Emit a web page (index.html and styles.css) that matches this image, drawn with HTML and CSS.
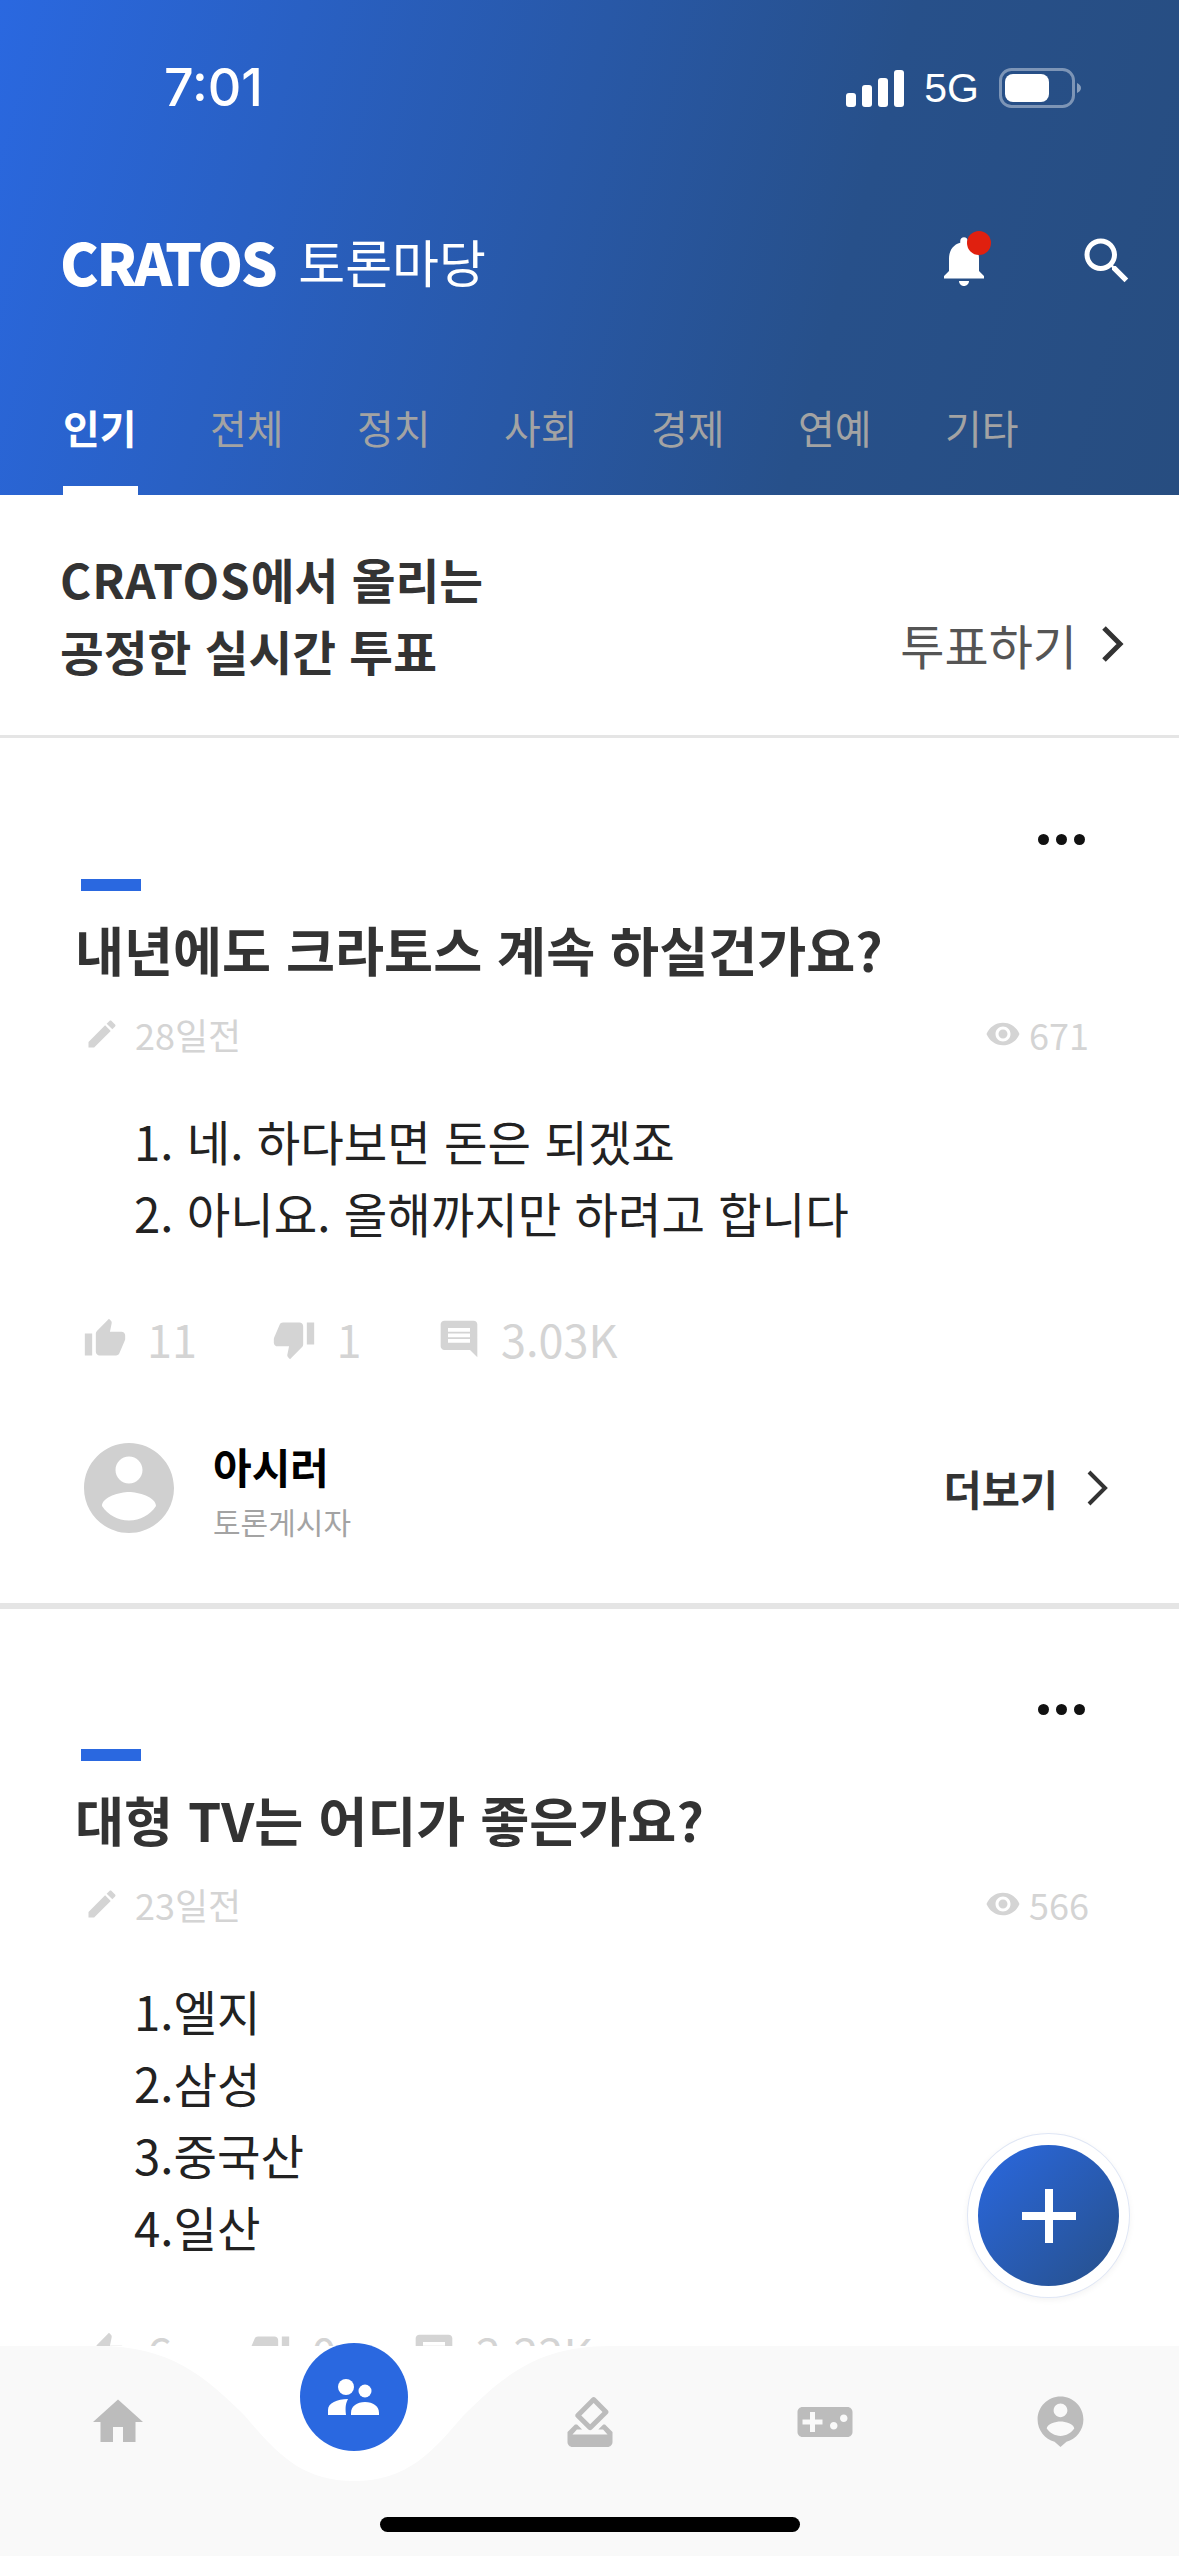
FILE: index.html
```html
<!DOCTYPE html>
<html lang="ko">
<head>
<meta charset="utf-8">
<title>CRATOS 토론마당</title>
<link rel="stylesheet" href="styles.css">
</head>
<body>
<div class="app">
  <header class="header">
    <div class="status">
      <span class="time">7:01</span>
      <div class="status-right">
        <svg class="signal" viewBox="0 0 58 37"><rect x="0" y="23" width="10" height="14" rx="3"/><rect x="16" y="15" width="10" height="22" rx="3"/><rect x="32" y="8" width="10" height="29" rx="3"/><rect x="48" y="0" width="10" height="37" rx="3"/></svg>
        <span class="net">5G</span>
        <svg class="battery" viewBox="0 0 82 40"><rect x="1.500" y="1.500" width="73" height="37" rx="11" fill="none" stroke="#fff" stroke-opacity=".4" stroke-width="3"/><rect x="6" y="6" width="44" height="28" rx="8" fill="#fff"/><path d="M78 15c2.500 1 4 3 4 5s-1.500 4-4 5z" fill="#fff" fill-opacity=".45"/></svg>
      </div>
    </div>
    <div class="topbar">
      <div class="brand"><span class="logo">CRATOS</span><span class="brand-sub">토론마당</span></div>
      <div class="top-icons">
        <span class="bell">
          <svg viewBox="0 0 24 24" class="ic-bell"><path d="M12 22c1.100 0 2-.9 2-2h-4c0 1.100.89 2 2 2zm6-6v-5c0-3.070-1.640-5.640-4.500-6.320V4c0-.83-.67-1.500-1.500-1.500s-1.500.67-1.500 1.500v.68C7.630 5.360 6 7.920 6 11v5l-2 2v1h16v-1l-2-2z"/></svg>
          <i class="dot"></i>
        </span>
        <svg viewBox="0 0 24 24" class="ic-search"><path d="M15.500 14h-.79l-.28-.27C15.410 12.590 16 11.110 16 9.500 16 5.910 13.090 3 9.500 3S3 5.910 3 9.500 5.910 16 9.500 16c1.610 0 3.090-.59 4.230-1.570l.27.28v.79l5 4.990L20.490 19l-4.990-5zm-6 0C7.010 14 5 11.990 5 9.500S7.010 5 9.500 5 14 7.010 14 9.500 11.990 14 9.500 14z"/></svg>
      </div>
    </div>
    <nav class="tabs">
      <a class="tab active">인기</a><a class="tab">전체</a><a class="tab">정치</a><a class="tab">사회</a><a class="tab">경제</a><a class="tab">연예</a><a class="tab">기타</a>
    </nav>
  </header>

  <section class="banner">
    <p class="banner-text"><span class="latin">CRATOS</span>에서 올리는<br>공정한 실시간 투표</p>
    <div class="banner-link"><span>투표하기</span><svg viewBox="0 0 24 38" class="chev"><path d="M4 3l16 16L4 35" fill="none" stroke="#333" stroke-width="5"/></svg></div>
  </section>

  <article class="card first">
    <div class="more"><i></i><i></i><i></i></div>
    <div class="mark"></div>
    <h2 class="title">내년에도 크라토스 계속 하실건가요?</h2>
    <div class="meta">
      <span class="meta-item"><svg viewBox="0 0 24 24" class="ic-edit"><path d="M3 17.250V21h3.750L17.810 9.940l-3.750-3.750L3 17.250zM20.710 7.040c.39-.39.39-1.020 0-1.410l-2.340-2.340c-.39-.39-1.020-.39-1.410 0l-1.830 1.830 3.750 3.750 1.830-1.830z"/></svg>28일전</span>
      <span class="meta-item views"><svg viewBox="0 0 24 24" class="ic-eye"><path d="M12 4.500C7 4.500 2.730 7.610 1 12c1.730 4.390 6 7.500 11 7.500s9.270-3.110 11-7.500c-1.730-4.390-6-7.500-11-7.500zM12 17c-2.760 0-5-2.240-5-5s2.240-5 5-5 5 2.240 5 5-2.240 5-5 5zm0-8c-1.660 0-3 1.340-3 3s1.340 3 3 3 3-1.340 3-3-1.340-3-3-3z"/></svg>671</span>
    </div>
    <ol class="options">
      <li>1. 네. 하다보면 돈은 되겠죠</li>
      <li>2. 아니요. 올해까지만 하려고 합니다</li>
    </ol>
    <div class="actions">
      <span class="act up"><svg viewBox="0 0 24 24"><path d="M1 21h4V9H1v12zm22-11c0-1.100-.9-2-2-2h-6.310l.95-4.570.03-.32c0-.41-.17-.79-.44-1.060L14.170 1 7.590 7.590C7.220 7.950 7 8.450 7 9v10c0 1.100.9 2 2 2h9c.83 0 1.540-.5 1.840-1.220l3.020-7.050c.09-.23.14-.47.14-.73v-2z"/></svg>11</span>
      <span class="act down"><svg viewBox="0 0 24 24"><path d="M15 3H6c-.83 0-1.540.5-1.840 1.220l-3.020 7.050c-.09.23-.14.47-.14.73v2c0 1.100.9 2 2 2h6.310l-.95 4.570-.03.32c0 .41.17.79.44 1.060L9.830 23l6.590-6.590c.36-.36.58-.86.58-1.410V5c0-1.100-.9-2-2-2zm4 0v12h4V3h-4z"/></svg>1</span>
      <span class="act"><svg viewBox="0 0 24 24"><path d="M21.990 4c0-1.100-.89-2-1.990-2H4c-1.100 0-2 .9-2 2v12c0 1.100.9 2 2 2h14l4 4-.01-18zM18 14H6v-2h12v2zm0-3H6V9h12v2zm0-3H6V6h12v2z"/></svg>3.03K</span>
    </div>
    <div class="author">
      <svg viewBox="2 2 20 20" class="avatar"><path d="M12 2C6.480 2 2 6.480 2 12s4.480 10 10 10 10-4.480 10-10S17.520 2 12 2zm0 3c1.660 0 3 1.340 3 3s-1.340 3-3 3-3-1.340-3-3 1.340-3 3-3zm0 14.200c-2.500 0-4.710-1.280-6-3.220.03-1.990 4-3.080 6-3.080 1.990 0 5.970 1.090 6 3.080-1.290 1.940-3.500 3.220-6 3.220z"/></svg>
      <div class="who"><strong>아시러</strong><span>토론게시자</span></div>
      <div class="see-more"><span>더보기</span><svg viewBox="0 0 24 38" class="chev"><path d="M4 3l16 16L4 35" fill="none" stroke="#333" stroke-width="4"/></svg></div>
    </div>
  </article>

  <article class="card">
    <div class="more"><i></i><i></i><i></i></div>
    <div class="mark"></div>
    <h2 class="title">대형 TV는 어디가 좋은가요?</h2>
    <div class="meta">
      <span class="meta-item"><svg viewBox="0 0 24 24" class="ic-edit"><path d="M3 17.250V21h3.750L17.810 9.940l-3.750-3.750L3 17.250zM20.710 7.040c.39-.39.39-1.020 0-1.410l-2.340-2.340c-.39-.39-1.020-.39-1.410 0l-1.830 1.830 3.750 3.750 1.830-1.830z"/></svg>23일전</span>
      <span class="meta-item views"><svg viewBox="0 0 24 24" class="ic-eye"><path d="M12 4.500C7 4.500 2.730 7.610 1 12c1.730 4.390 6 7.500 11 7.500s9.270-3.110 11-7.500c-1.730-4.390-6-7.500-11-7.500zM12 17c-2.760 0-5-2.240-5-5s2.240-5 5-5 5 2.240 5 5-2.240 5-5 5zm0-8c-1.660 0-3 1.340-3 3s1.340 3 3 3 3-1.340 3-3-1.340-3-3-3z"/></svg>566</span>
    </div>
    <ol class="options">
      <li>1.엘지</li>
      <li>2.삼성</li>
      <li>3.중국산</li>
      <li>4.일산</li>
    </ol>
    <div class="actions">
      <span class="act up"><svg viewBox="0 0 24 24"><path d="M1 21h4V9H1v12zm22-11c0-1.100-.9-2-2-2h-6.310l.95-4.570.03-.32c0-.41-.17-.79-.44-1.060L14.170 1 7.590 7.590C7.220 7.950 7 8.450 7 9v10c0 1.100.9 2 2 2h9c.83 0 1.540-.5 1.840-1.220l3.020-7.050c.09-.23.14-.47.14-.73v-2z"/></svg>6</span>
      <span class="act down"><svg viewBox="0 0 24 24"><path d="M15 3H6c-.83 0-1.540.5-1.840 1.220l-3.020 7.050c-.09.23-.14.47-.14.73v2c0 1.100.9 2 2 2h6.310l-.95 4.570-.03.32c0 .41.17.79.44 1.060L9.830 23l6.590-6.590c.36-.36.58-.86.58-1.410V5c0-1.100-.9-2-2-2zm4 0v12h4V3h-4z"/></svg>0</span>
      <span class="act"><svg viewBox="0 0 24 24"><path d="M21.990 4c0-1.100-.89-2-1.990-2H4c-1.100 0-2 .9-2 2v12c0 1.100.9 2 2 2h14l4 4-.01-18zM18 14H6v-2h12v2zm0-3H6V9h12v2zm0-3H6V6h12v2z"/></svg>2.22K</span>
    </div>
  </article>

  <button class="fab" aria-label="add"><svg viewBox="0 0 54 54"><path d="M23 0h8v23h23v8H31v23h-8V31H0v-8h23z" fill="#fff"/></svg></button>

  <footer class="tabbar">
    <svg class="notch" viewBox="0 0 1179 210"><path d="M98 0C170 0 205 30 245 70C275 105 300 135 354 135C408 135 433 105 463 70C503 30 538 0 610 0Z" fill="#fff"/></svg>
    <svg class="nav-ic home" viewBox="0 0 24 24"><path d="M10 20v-6h4v6h5v-8h3L12 3 2 12h3v8z"/></svg>
    <span class="nav-active"><svg viewBox="0 0 108 108"><circle cx="46" cy="44" r="8"/><circle cx="65" cy="48" r="6.500"/><path d="M28 72v-5c0-7 9-11 20-11c-2 4-3 7-2 16z"/><path d="M51 72v-2c0-7 6-11 14-11s14 4 14 11v2z"/></svg></span>
    <svg class="nav-ic vote" viewBox="0 0 24 24"><path d="M18 13h-.68l-2 2h1.910L19 17H5l1.780-2h2.050l-2-2H6l-3 3v4c0 1.100.89 2 1.990 2H19c1.100 0 2-.89 2-2v-4l-3-3zm-1-5.050l-4.950 4.950-3.540-3.540 4.950-4.950L17 7.950zm-4.240-5.660L6.390 8.660c-.39.39-.39 1.020 0 1.410l4.950 4.950c.39.39 1.020.39 1.410 0l6.360-6.360c.39-.39.39-1.020 0-1.410L14.160 2.300c-.38-.4-1.010-.4-1.400-.01z"/></svg>
    <svg class="nav-ic game" viewBox="0 0 24 24"><path d="M21 6H3c-1.100 0-2 .9-2 2v8c0 1.100.9 2 2 2h18c1.100 0 2-.9 2-2V8c0-1.100-.9-2-2-2zm-10 7H8v3H6v-3H3v-2h3V8h2v3h3v2zm4.500 2c-.83 0-1.500-.67-1.500-1.500s.67-1.500 1.500-1.500 1.500.67 1.500 1.500-.67 1.500-1.500 1.500zm4-3c-.83 0-1.500-.67-1.500-1.500S18.670 9 19.500 9s1.500.67 1.500 1.500-.67 1.500-1.500 1.500z"/></svg>
    <svg class="nav-ic me" viewBox="0 0 24 24"><path d="M12 2C6.480 2 2 6.480 2 12c0 4.700 3.200 8.600 7.400 9.700L12 24l2.600-2.300C18.800 20.600 22 16.700 22 12c0-5.520-4.480-10-10-10zm0 3c1.660 0 3 1.340 3 3s-1.340 3-3 3-3-1.340-3-3 1.340-3 3-3zm0 14.200c-2.500 0-4.710-1.280-6-3.220.03-1.990 4-3.080 6-3.080 1.990 0 5.970 1.090 6 3.080-1.290 1.940-3.500 3.220-6 3.220z"/></svg>
    <i class="home-bar"></i>
  </footer>
</div>
</body>
</html>
```
FILE: styles.css
```css
* { box-sizing: border-box; }
html, body { margin: 0; padding: 0; background: #fff; }
body { font-family: "Noto Sans CJK KR", "Noto Sans", sans-serif; color: #333; }
.app { position: relative; width: 1179px; height: 2556px; overflow: hidden; background: #fff; }

.header { height: 495px; background: linear-gradient(105deg, #2a68e0 0%, #27508a 70%, #274d80 100%); color: #fff; display: flex; flex-direction: column; }
.status { height: 216px; padding: 58px 98px 0 164px; display: flex; justify-content: space-between; align-items: flex-start; }
.time { font-family: "Inter", sans-serif; font-weight: 500; font-size: 52px; line-height: 60px; }
.status-right { display: flex; align-items: center; gap: 20px; height: 60px; }
.signal { width: 58px; height: 37px; fill: #fff; }
.net { font-family: "Liberation Sans", sans-serif; font-size: 41px; line-height: 60px; }
.battery { width: 82px; height: 40px; }

.topbar { height: 90px; padding: 0 42px 0 60px; display: flex; justify-content: space-between; align-items: center; }
.brand { display: flex; align-items: center; gap: 23px; }
.logo { font-weight: 900; font-size: 58px; line-height: 80px; letter-spacing: -2.500px; }
.brand-sub { font-size: 51px; line-height: 80px; font-weight: 400; }
.top-icons { display: flex; align-items: center; gap: 83px; }
.bell { position: relative; display: block; width: 60px; height: 60px; }
.ic-bell { width: 60px; height: 60px; fill: #fff; display: block; }
.dot { position: absolute; right: 3px; top: 0; width: 24px; height: 24px; border-radius: 50%; background: #e0200f; }
.ic-search { width: 60px; height: 60px; fill: #fff; display: block; }

.tabs { flex: 1; display: flex; gap: 74px; padding: 91px 0 0 63px; }
.tab { position: relative; width: 73px; font-size: 40px; line-height: 60px; color: #a3a3a3; white-space: nowrap; }
.tab.active { color: #fff; font-weight: 700; }
.tab.active::after { content: ""; position: absolute; left: 0; bottom: 0; width: 75px; height: 9px; background: #fff; }

.banner { height: 243px; border-bottom: 3px solid #e5e5e5; padding: 0 55px 0 60px; display: flex; justify-content: space-between; align-items: center; }
.banner-text { margin: 0; font-size: 47.600px; line-height: 72px; font-weight: 700; color: #333; }
.latin { letter-spacing: 1px; }
.banner-link { display: flex; align-items: center; gap: 23px; font-size: 48px; color: #555; margin-top: 58px; }
.chev { width: 24px; height: 38px; display: block; }

.card { border-bottom: 6px solid #e5e5e5; height: 870px; display: flex; flex-direction: column; position: relative; }
.first { margin-top: 1px; }
.more { display: flex; gap: 7px; justify-content: flex-end; padding: 95px 94px 0 0; height: 107px; }
.more i { width: 11px; height: 11px; border-radius: 50%; background: #111; display: block; }
.mark { width: 60px; height: 12px; background: #2a68e0; margin: 33px 0 0 81px; }
.title { margin: 18px 0 0 75px; font-size: 53.300px; line-height: 80px; font-weight: 700; color: #333; }
.meta { display: flex; justify-content: space-between; align-items: center; height: 56px; margin-top: 17px; padding: 0 90px 0 84px; font-size: 36px; color: #d4d4d4; }
.meta-item { display: flex; align-items: center; gap: 15px; }
.views { gap: 8px; }
.ic-edit { width: 36px; height: 36px; fill: #d4d4d4; }
.ic-eye { width: 36px; height: 36px; fill: #d4d4d4; }
.options { list-style: none; margin: 43px 0 0 0; padding: 0 0 0 134px; font-size: 47.300px; line-height: 72px; color: #222; }
.actions { display: flex; gap: 75.500px; margin-top: 60px; padding-left: 83px; font-size: 45px; line-height: 60px; color: #d4d4d4; }
.act { display: flex; align-items: center; gap: 20px; }
.act svg { width: 44px; height: 44px; fill: #d4d4d4; }
.author { display: flex; align-items: center; margin-top: 66px; padding: 0 70px 0 84px; }
.avatar { width: 90px; height: 90px; fill: #d0d0d0; display: block; }
.who { display: flex; flex-direction: column; margin-left: 39px; padding-top: 4px; }
.who strong { font-size: 42px; line-height: 54px; font-weight: 700; color: #000; }
.who span { font-size: 30px; line-height: 40px; margin-top: 8px; color: #a3a3a3; }
.see-more { margin-left: auto; display: flex; align-items: center; gap: 27px; font-size: 41.500px; font-weight: 700; color: #333; }

.fab { position: absolute; left: 967px; top: 2133px; width: 163px; height: 165px; border-radius: 50%; background: #fff; border: 1px solid #dfe6f5; padding: 0; box-shadow: 0 2px 6px rgba(0,0,0,.05); display: flex; align-items: center; justify-content: center; }
.fab::before { content: ""; position: absolute; left: 10px; top: 11px; width: 141px; height: 141px; border-radius: 50%; background: linear-gradient(135deg, #2a68e0, #27508a); }
.fab svg { position: relative; width: 54px; height: 54px; }

.tabbar { position: absolute; left: 0; right: 0; bottom: 0; height: 210px; background: #f9f9f9; }
.notch { position: absolute; left: 0; top: 0; width: 1179px; height: 210px; }
.nav-ic { position: absolute; fill: #bcbcbc; }
.home { left: 88px; top: 46px; width: 60px; height: 60px; }
.nav-active { position: absolute; left: 300px; top: -3px; width: 108px; height: 108px; border-radius: 50%; background: #2a68e0; }
.nav-active svg { display: block; width: 108px; height: 108px; fill: #fff; }
.vote { left: 560px; top: 46px; width: 60px; height: 60px; }
.game { left: 795px; top: 46px; width: 60px; height: 60px; }
.me { left: 1033px; top: 46px; width: 55px; height: 55px; }
.home-bar { position: absolute; left: 380px; top: 171px; width: 420px; height: 15px; border-radius: 8px; background: #000; }
```
